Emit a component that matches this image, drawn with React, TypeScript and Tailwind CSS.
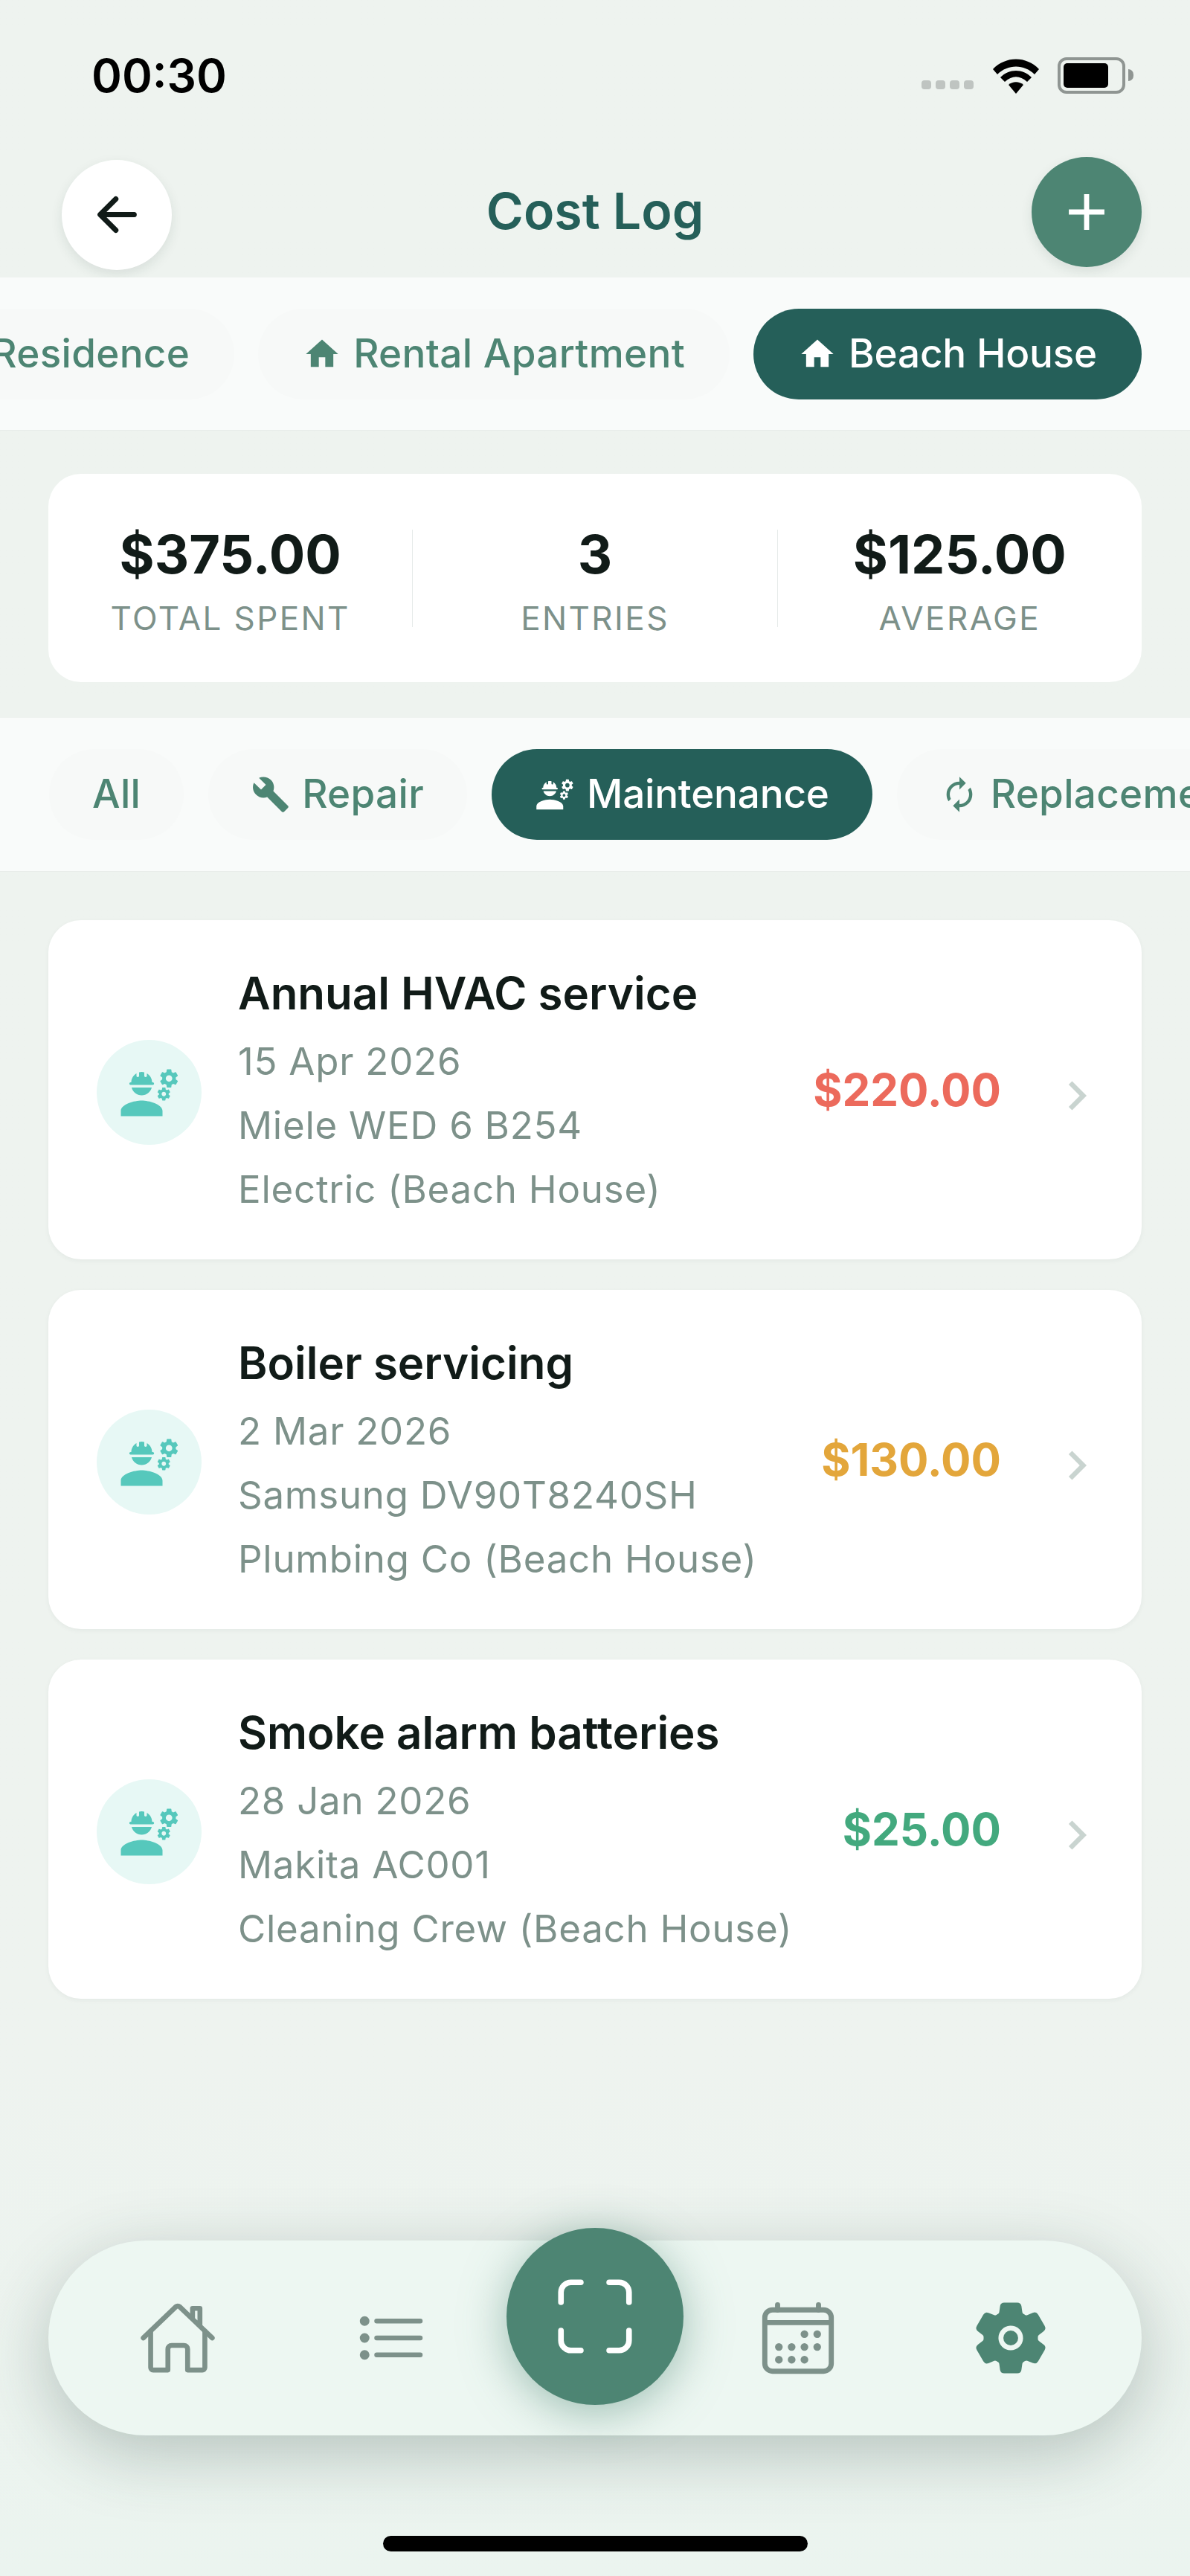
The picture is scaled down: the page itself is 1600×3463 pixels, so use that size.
import { IoArrowBack, IoCalendarOutline, IoHomeOutline, IoListOutline, IoScanOutline, IoSettings } from "react-icons/io5"
import { MdAdd, MdAutorenew, MdBuild, MdChevronRight, MdEngineering, MdHome } from "react-icons/md"

const entries = [
  { title: "Annual HVAC service", date: "15 Apr 2026", item: "Miele WED 6 B254", vendor: "Electric (Beach House)", price: "$220.00", color: "text-[#ec6a5c]" },
  { title: "Boiler servicing", date: "2 Mar 2026", item: "Samsung DV90T8240SH", vendor: "Plumbing Co (Beach House)", price: "$130.00", color: "text-[#e3a63b]" },
  { title: "Smoke alarm batteries", date: "28 Jan 2026", item: "Makita AC001", vendor: "Cleaning Crew (Beach House)", price: "$25.00", color: "text-[#43a97e]" },
]

function Pill({ label, icon, active = false, pad = "px-[60px]" }: { label: string; icon?: React.ReactNode; active?: boolean; pad?: string }) {
  return (
    <div
      className={
        "flex h-[122px] shrink-0 items-center gap-[16px] rounded-full text-[53px] font-medium " +
        pad +
        (active ? " bg-[#255f59] tracking-[-0.2px] text-white" : " bg-[#f7f9f8] tracking-[0.3px] text-[#4d8573]")
      }
    >
      {icon}
      <span>{label}</span>
    </div>
  )
}

function Stat({ value, label }: { value: string; label: string }) {
  return (
    <div className="flex flex-1 flex-col items-center">
      <div className="text-[72px] leading-[84px] font-bold text-[#111b18]">{value}</div>
      <div className="mt-[19px] text-[44px] leading-[50px] tracking-[2.4px] text-[#7d918a]">{label}</div>
    </div>
  )
}

export default function App() {
  return (
    <div className="flex h-[3463px] w-[1600px] flex-col overflow-hidden bg-gradient-to-b from-[#eef3ef] via-[#eef3ef] via-80% to-[#ebf4ef] font-['Inter',sans-serif]">
      {/* Status bar */}
      <div className="flex h-[204px] shrink-0 items-start justify-between pt-[58px] pr-[76px] pl-[123px]">
        <div className="text-[62px] leading-[88px] font-semibold text-black">00:30</div>
        <div className="flex items-center pt-[18px]">
          <div className="mt-[25px] mr-[23px] flex gap-[6px]">
            <span className="h-[12px] w-[13px] rounded-[4px] bg-[#bfc4c1]" />
            <span className="h-[12px] w-[13px] rounded-[4px] bg-[#bfc4c1]" />
            <span className="h-[12px] w-[13px] rounded-[4px] bg-[#bfc4c1]" />
            <span className="h-[12px] w-[13px] rounded-[4px] bg-[#bfc4c1]" />
          </div>
          <svg width="68" height="50" viewBox="0 0 68 50" className="mr-[22px]">
            <path d="M3 17 C20 -1 48 -1 65 17 L59 24 C45 10 23 10 9 24 Z" fill="#000" />
            <path d="M13 28 C25 16 43 16 55 28 L49 34 C39 25 29 25 19 34 Z" fill="#000" />
            <path d="M24 38 C30 33 38 33 44 38 L34 50 Z" fill="#000" />
          </svg>
          <div className="flex items-center">
            <div className="flex h-[49px] w-[91px] items-center rounded-[12px] border-[4px] border-[#8f9592] p-[4px]">
              <div className="h-full w-[60px] rounded-[5px] bg-black" />
            </div>
            <div className="ml-[4px] h-[16px] w-[7px] rounded-r-full bg-[#8f9592]" />
          </div>
        </div>
      </div>

      {/* Header */}
      <div className="flex h-[169px] shrink-0 items-center justify-between pr-[65px] pl-[83px]">
        <button className="flex h-[148px] w-[148px] items-center justify-center rounded-full bg-white text-[#111b18] shadow-[0_6px_16px_rgba(30,60,50,0.1)]">
          <IoArrowBack size={75} />
        </button>
        <h1 className="mb-[12px] -ml-[18px] text-[68px] font-semibold text-[#255f59]">Cost Log</h1>
        <button className="-mt-[8px] flex h-[148px] w-[148px] items-center justify-center rounded-full bg-[#4d8573] text-white shadow-[0_6px_16px_rgba(30,60,50,0.1)]">
          <MdAdd size={82} />
        </button>
      </div>

      {/* Property tabs */}
      <div className="flex h-[206px] shrink-0 items-center justify-end gap-[32px] overflow-hidden border-b border-[#e8ecea] bg-[#f9fbfa] pr-[65px]">
        <Pill label="Primary Residence" icon={<MdHome size={52} />} />
        <Pill label="Rental Apartment" icon={<MdHome size={52} />} />
        <Pill label="Beach House" icon={<MdHome size={52} />} active />
      </div>

      {/* Totals */}
      <div className="mx-[65px] mt-[58px] flex h-[280px] shrink-0 rounded-[44px] bg-white pt-[66px]">
        <Stat value="$375.00" label="TOTAL SPENT" />
        <div className="mt-[9px] h-[131px] w-px bg-[#e6ebe9]" />
        <Stat value="3" label="ENTRIES" />
        <div className="mt-[9px] h-[131px] w-px bg-[#e6ebe9]" />
        <Stat value="$125.00" label="AVERAGE" />
      </div>

      {/* Type filters */}
      <div className="mt-[48px] flex h-[207px] shrink-0 items-center gap-[33px] overflow-hidden border-b border-[#e8ecea] bg-[#f9fbfa] pl-[66px]">
        <Pill label="All" pad="px-[58px]" />
        <Pill label="Repair" pad="px-[58px]" icon={<MdBuild size={52} />} />
        <Pill label="Maintenance" pad="px-[58px]" icon={<MdEngineering size={54} />} active />
        <Pill label="Replacement" pad="px-[58px]" icon={<MdAutorenew size={52} />} />
      </div>

      {/* Entries */}
      <div className="mt-[65px] flex flex-col gap-[41px] px-[65px]">
        {entries.map((e) => (
          <div key={e.title} className="flex items-center rounded-[44px] bg-white pt-[58px] pr-[48px] pb-[51px] pl-[65px] shadow-[0_2px_6px_rgba(30,60,50,0.05)]">
            <div className="flex h-[141px] w-[141px] shrink-0 items-center justify-center rounded-full bg-[#e7f8f5] text-[#56c8bc]">
              <MdEngineering size={84} />
            </div>
            <div className="ml-[49px] flex-1">
              <div className="text-[60px] leading-[80px] font-semibold text-[#111b18]">{e.title}</div>
              <div className="mt-[9px] text-[51px] leading-[86px] tracking-[0.75px] text-[#7d918a]">{e.date}</div>
              <div className="text-[51px] leading-[86px] tracking-[0.75px] text-[#7d918a]">{e.item}</div>
              <div className="text-[51px] leading-[86px] tracking-[0.75px] text-[#7d918a]">{e.vendor}</div>
            </div>
            <div className={"-mt-[8px] text-[60px] font-bold " + e.color}>{e.price}</div>
            <MdChevronRight size={78} className="mt-[8px] ml-[63px] text-[#c9d4d0]" />
          </div>
        ))}
      </div>

      {/* Bottom nav */}
      <div className="relative mx-[65px] mt-auto flex h-[262px] shrink-0 items-center justify-between rounded-full bg-[#edf7f2] pr-[123px] pl-[121px] text-[#7d918a] shadow-[0_24px_90px_rgba(40,70,60,0.28)]">
        <div className="flex items-center gap-[182px]">
          <IoHomeOutline size={106} />
          <IoListOutline size={104} />
        </div>
        <div className="absolute -top-[17px] left-[616px] flex h-[238px] w-[238px] items-center justify-center rounded-full bg-[#4d8573] text-white shadow-[0_10px_60px_rgba(77,133,115,0.5)]">
          <IoScanOutline size={122} />
        </div>
        <div className="flex items-center gap-[178px]">
          <IoCalendarOutline size={110} />
          <IoSettings size={106} className="text-[#4d8573]" />
        </div>
      </div>

      {/* Home indicator */}
      <div className="mt-[135px] mb-[33px] ml-[515px] h-[21px] w-[571px] shrink-0 rounded-full bg-black" />
    </div>
  )
}
